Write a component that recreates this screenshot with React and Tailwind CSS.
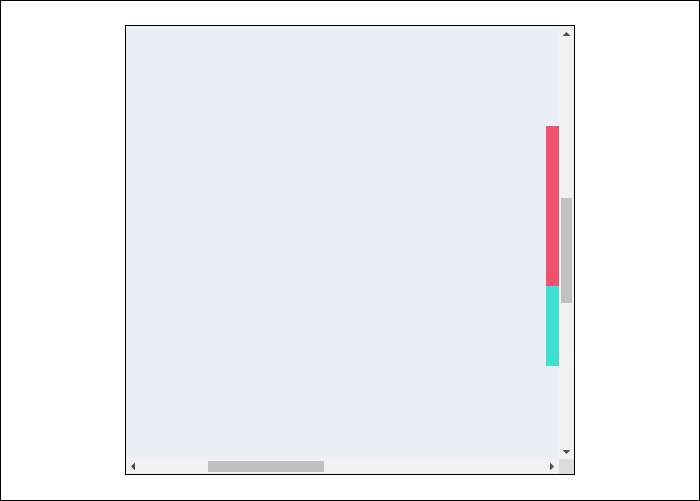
const arrowColor = '#505050';

function ArrowButton({ points }) {
  return (
    <div className="w-[15px] h-[15px] shrink-0">
      <svg width="15" height="15" viewBox="0 0 15 15">
        <polygon points={points} fill={arrowColor} />
      </svg>
    </div>
  );
}

export default function App() {
  return (
    <div className="w-[700px] h-[501px] bg-white border border-black pt-[24px] pl-[124px]">
      <div className="w-[450px] h-[450px] border border-black grid grid-cols-[433px_15px] grid-rows-[433px_15px]">
        {/* chart viewport */}
        <div className="bg-[#eaeef6] overflow-hidden pt-[100px] pl-[420px]">
          <div className="flex flex-col w-[13px]">
            <div className="h-[160px] bg-[#f0516f]" />
            <div className="h-[80px] bg-[#40e0d0]" />
          </div>
        </div>

        {/* vertical scrollbar */}
        <div className="bg-[#f1f1f1] flex flex-col">
          <ArrowButton points="3.5,10 7.5,6 11.5,10" />
          <div className="flex-1 px-[2px]">
            <div className="mt-[157px] h-[105px] bg-[#c1c1c1]" />
          </div>
          <ArrowButton points="3.5,6 11.5,6 7.5,10" />
        </div>

        {/* horizontal scrollbar */}
        <div className="bg-[#f1f1f1] flex">
          <ArrowButton points="9,3.5 9,11.5 5,7.5" />
          <div className="flex-1 py-[2px]">
            <div className="ml-[67px] w-[116px] h-full bg-[#c1c1c1]" />
          </div>
          <ArrowButton points="6,3.5 6,11.5 10,7.5" />
        </div>

        {/* corner */}
        <div className="bg-[#dcdcdc]" />
      </div>
    </div>
  );
}
